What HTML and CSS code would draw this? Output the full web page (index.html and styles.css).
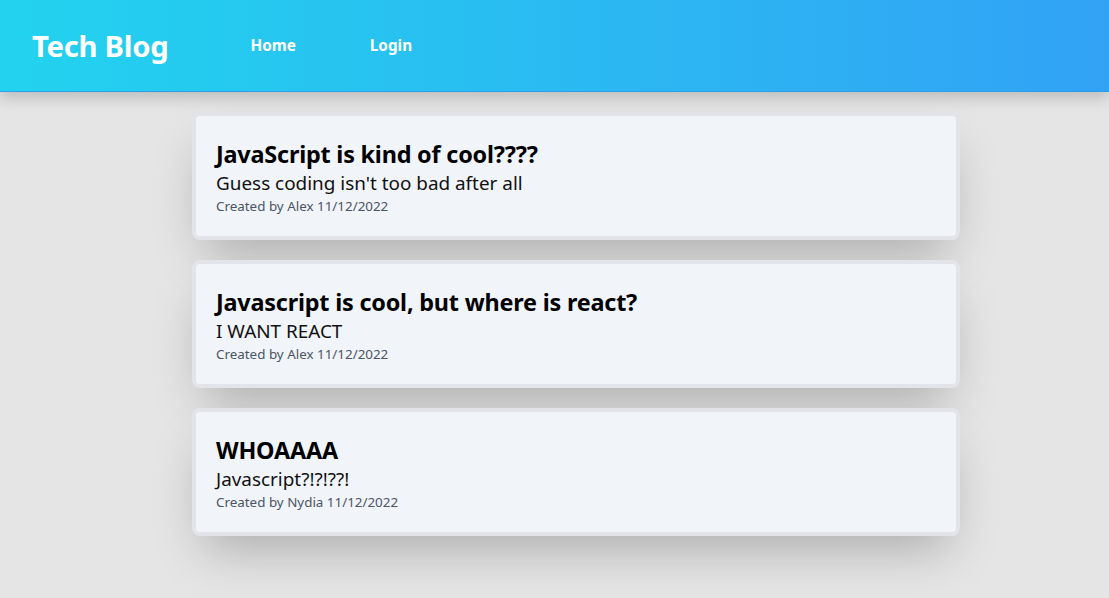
FILE: index.html
```html
<!DOCTYPE html>
<html>
<head>
<meta charset="utf-8">
<link rel="stylesheet" href="styles.css">
</head>
<body>
<header class="header">
  <h1 class="brand">Tech Blog</h1>
  <nav class="nav">
    <a class="nav-link" href="#">Home</a>
    <a class="nav-link" href="#">Login</a>
  </nav>
</header>
<main class="posts">
  <article class="card">
    <h2 class="card-title">JavaScript is kind of cool????</h2>
    <p class="card-body">Guess coding isn't too bad after all</p>
    <p class="card-meta">Created by Alex 11/12/2022</p>
  </article>
  <article class="card">
    <h2 class="card-title">Javascript is cool, but where is react?</h2>
    <p class="card-body">I WANT REACT</p>
    <p class="card-meta">Created by Alex 11/12/2022</p>
  </article>
  <article class="card">
    <h2 class="card-title">WHOAAAA</h2>
    <p class="card-body">Javascript?!?!??!</p>
    <p class="card-meta">Created by Nydia 11/12/2022</p>
  </article>
</main>
</body>
</html>
```
FILE: styles.css
```css
* { box-sizing: border-box; }
html, body { margin: 0; padding: 0; }
body {
  background: #e5e5e5;
  font-family: "Noto Sans", "Open Sans", sans-serif;
  color: #000;
  min-height: 598px;
}
.header {
  height: 92px;
  background: linear-gradient(to right, #22d3ee, #32a2f5);
  border-bottom: 1px solid #2b9fe8;
  display: flex;
  align-items: center;
  padding-left: 32px;
  box-shadow: 0 6px 14px rgba(0,0,0,0.18);
  position: relative;
  z-index: 1;
}
.brand {
  margin: 0;
  color: #fff;
  font-size: 29.3px;
  font-weight: 700;
  letter-spacing: -0.3px;
}
.nav {
  display: flex;
  gap: 74px;
  margin-left: 82px;
  margin-top: -2px;
}
.nav-link {
  color: #fff;
  text-decoration: none;
  font-weight: 700;
  font-size: 15.3px;
}
.posts {
  width: 768px;
  margin: 20px 0 0 192px;
  display: flex;
  flex-direction: column;
  gap: 20px;
}
.card {
  height: 128px;
  background: #f1f4f9;
  border: 4px solid #e2e4e9;
  border-radius: 8px;
  padding: 22px 20px 0;
  box-shadow: 0 25px 50px -12px rgba(0,0,0,0.25);
}
.card-title {
  margin: 0;
  font-size: 23.4px;
  font-weight: 700;
  line-height: 32px;
  letter-spacing: -0.2px;
}
.card-body {
  margin: 0;
  font-size: 18.9px;
  line-height: 26px;
  color: #111;
}
.card-meta {
  margin: 0;
  font-size: 13.4px;
  line-height: 20px;
  color: #4b5563;
}
```
